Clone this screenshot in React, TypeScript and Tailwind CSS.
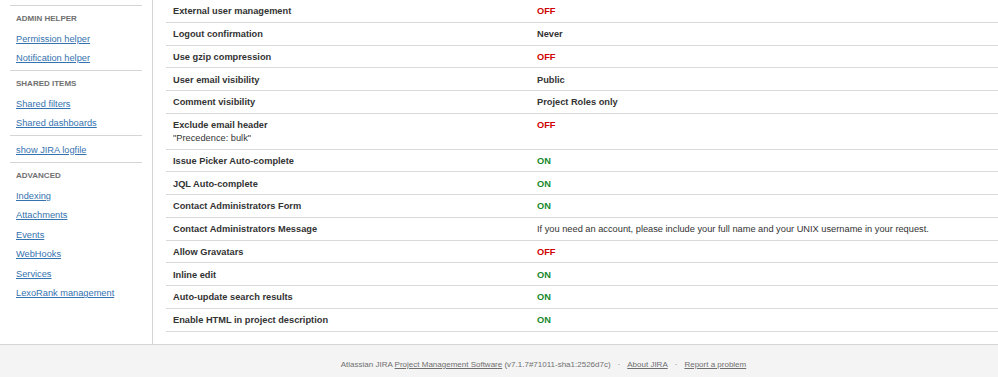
import React from "react";

type Row = {
  label: string;
  note?: string;
  value: string;
  kind: "on" | "off" | "bold" | "text";
};

const rows: Row[] = [
  { label: "External user management", value: "OFF", kind: "off" },
  { label: "Logout confirmation", value: "Never", kind: "bold" },
  { label: "Use gzip compression", value: "OFF", kind: "off" },
  { label: "User email visibility", value: "Public", kind: "bold" },
  { label: "Comment visibility", value: "Project Roles only", kind: "bold" },
  {
    label: "Exclude email header",
    note: '"Precedence: bulk"',
    value: "OFF",
    kind: "off",
  },
  { label: "Issue Picker Auto-complete", value: "ON", kind: "on" },
  { label: "JQL Auto-complete", value: "ON", kind: "on" },
  { label: "Contact Administrators Form", value: "ON", kind: "on" },
  {
    label: "Contact Administrators Message",
    value:
      "If you need an account, please include your full name and your UNIX username in your request.",
    kind: "text",
  },
  { label: "Allow Gravatars", value: "OFF", kind: "off" },
  { label: "Inline edit", value: "ON", kind: "on" },
  { label: "Auto-update search results", value: "ON", kind: "on" },
  { label: "Enable HTML in project description", value: "ON", kind: "on" },
];

const sections: { title?: string; links: string[] }[] = [
  { title: "Admin helper", links: ["Permission helper", "Notification helper"] },
  { title: "Shared items", links: ["Shared filters", "Shared dashboards"] },
  { links: ["show JIRA logfile"] },
  {
    title: "Advanced",
    links: [
      "Indexing",
      "Attachments",
      "Events",
      "WebHooks",
      "Services",
      "LexoRank management",
    ],
  },
];

function valueClass(kind: Row["kind"]) {
  switch (kind) {
    case "on":
      return "font-bold text-[#14892c]";
    case "off":
      return "font-bold text-[#d00000]";
    case "bold":
      return "font-bold text-[#333333]";
    default:
      return "text-[#333333]";
  }
}

function Sidebar() {
  return (
    <div className="w-[153px] shrink-0 border-r border-[#d5d5d5] pt-[5px]">
      {sections.map((s, i) => (
        <div
          key={i}
          className={
            "mx-[10px] border-t border-[#d5d5d5] " +
            (s.title ? "pb-[1px]" : "pt-[4.75px] pb-[1.75px]")
          }
        >
          {s.title && (
            <div className="flex h-[24px] items-center px-[6px] pt-[2px] text-[8px] font-bold uppercase text-[#707070]">
              {s.title}
            </div>
          )}
          {s.links.map((l) => (
            <div key={l} className="flex h-[19.5px] items-center px-[6px]">
              <a
                href="#"
                className="text-[9.25px] text-[#3572b0] underline decoration-[#3572b0]"
              >
                {l}
              </a>
            </div>
          ))}
        </div>
      ))}
    </div>
  );
}

export default function App() {
  return (
    <div className="w-[998px] h-[377px] overflow-hidden bg-white font-['Liberation_Sans',Arial,sans-serif]">
      <div className="flex h-[344px]">
        <Sidebar />
        <div className="flex-1 pl-[13px]">
          <table className="w-full border-collapse text-[9.25px] leading-[13px] text-[#333333]">
            <tbody>
              {rows.map((r) => (
                <tr key={r.label} className="border-b border-[#d9d9d9]">
                  <td className="w-[364px] px-[7px] pt-[5.375px] pb-[3.375px] align-top">
                    <div className="font-bold">{r.label}</div>
                    {r.note && <div>{r.note}</div>}
                  </td>
                  <td className="px-[7px] pt-[5.375px] pb-[3.375px] align-top">
                    <span className={valueClass(r.kind)}>{r.value}</span>
                  </td>
                </tr>
              ))}
            </tbody>
          </table>
        </div>
      </div>
      <div className="h-[33px] border-t border-[#d5d5d5] bg-[#f4f4f4] pl-[89px] pt-[15px] text-center text-[8px] leading-[10px] text-[#707070]">
        Atlassian JIRA{" "}
        <a href="#" className="underline">
          Project Management Software
        </a>{" "}
        (v7.1.7#71011-sha1:2526d7c)
        <span className="mx-[7px]">·</span>
        <a href="#" className="underline">
          About JIRA
        </a>
        <span className="mx-[7px]">·</span>
        <a href="#" className="underline">
          Report a problem
        </a>
      </div>
    </div>
  );
}
